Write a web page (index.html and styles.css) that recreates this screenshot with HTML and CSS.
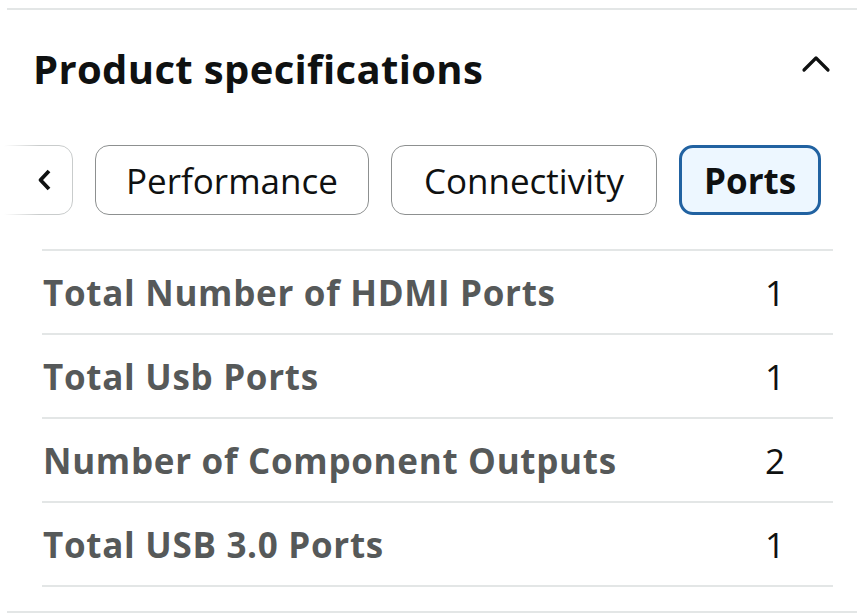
FILE: index.html
```html
<!DOCTYPE html>
<html>
<head>
<meta charset="utf-8">
<link rel="stylesheet" href="styles.css">
</head>
<body>
<div class="page">
  <div class="rule"></div>
  <div class="header">
    <h2 class="title">Product specifications</h2>
    <svg class="chev" width="30" height="18" viewBox="0 0 30 18"><path d="M3 15 L15 3 L27 15" fill="none" stroke="#0f1111" stroke-width="3.2" stroke-linecap="round" stroke-linejoin="round"/></svg>
  </div>
  <div class="tabs">
    <div class="tab tab-prev">
      <svg width="15" height="24" viewBox="0 0 15 24"><path d="M12 3 L3.5 12 L12 21" fill="none" stroke="#0f1111" stroke-width="3.8" stroke-linejoin="round"/></svg>
    </div>
    <div class="tab">Performance</div>
    <div class="tab tab-wide">Connectivity</div>
    <div class="tab active">Ports</div>
    <div class="fade"></div>
  </div>
  <div class="table">
    <div class="row"><span class="label">Total Number of HDMI Ports</span><span class="value">1</span></div>
    <div class="row"><span class="label">Total Usb Ports</span><span class="value">1</span></div>
    <div class="row"><span class="label">Number of Component Outputs</span><span class="value">2</span></div>
    <div class="row"><span class="label">Total USB 3.0 Ports</span><span class="value">1</span></div>
  </div>
  <div class="rule bottom"></div>
</div>
</body>
</html>
```
FILE: styles.css
```css
html, body { margin: 0; padding: 0; background: #fff; }
body { width: 864px; height: 614px; overflow: hidden; font-family: "Open Sans", "Liberation Sans", sans-serif; color: #0f1111; }
.page { padding: 8px 7px 0; }
.rule { height: 2px; background: #e3e6e6; }
.rule.bottom { margin-top: 24px; }
.header { display: flex; justify-content: space-between; align-items: center; padding: 0 26px 0 26px; height: 118px; }
.title { margin: 0; font-size: 40px; font-weight: 700; letter-spacing: 0.35px; color: #0f1111; line-height: 1.2; }
.chev { margin-right: 0; margin-top: -10px; }
.tabs { position: relative; display: flex; gap: 22px; height: 70px; margin-top: 17px; overflow: hidden; margin-left: -7px; }
.tab { box-sizing: border-box; height: 70px; border: 1.5px solid #8d9090; border-radius: 14px; padding: 0 30px; display: flex; align-items: center; font-size: 35px; color: #0f1111; white-space: nowrap; }
.tab-prev { width: 80px; margin-left: -7px; padding: 0 0 0 43px; border-color: #c9cccc; }
.tab-wide { padding: 0 32px; }
.tab.active { border: 3.5px solid #2162a1; background: #edf7ff; font-weight: 700; padding: 0 22px; }
.fade { position: absolute; left: 0; top: 0; width: 40px; height: 70px; background: linear-gradient(to right, #fff 10%, rgba(255,255,255,0)); }
.table { margin: 34px 24px 0 35px; border-top: 2px solid #e3e6e6; }
.row { display: flex; justify-content: space-between; align-items: center; height: 82px; border-bottom: 2px solid #e3e6e6; padding: 0 48px 0 1px; }
.label { font-size: 35px; font-weight: 700; color: #565959; letter-spacing: 0.7px; }
.value { font-size: 35px; color: #0f1111; }
```
